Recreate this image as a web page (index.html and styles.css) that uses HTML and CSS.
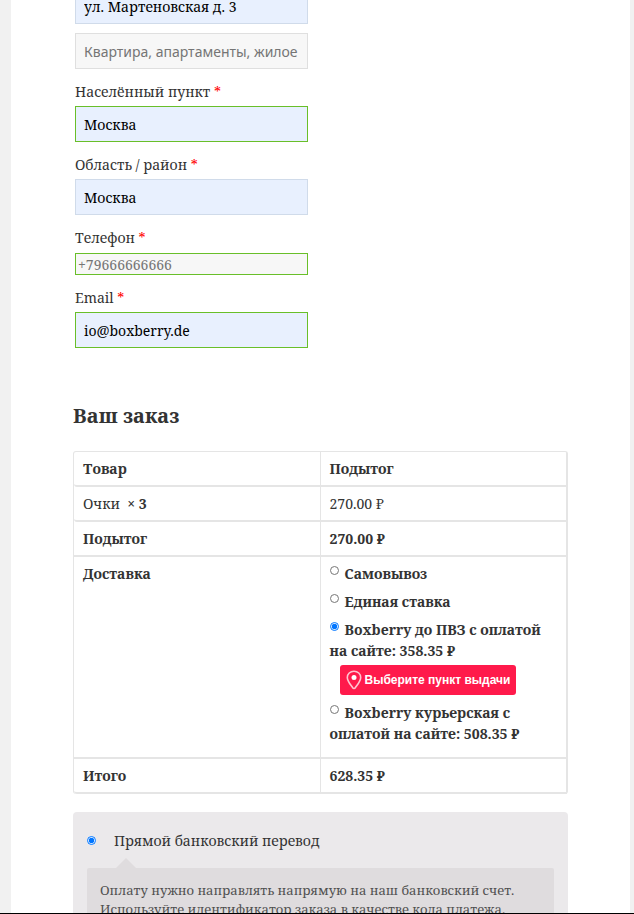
FILE: index.html
```
<!doctype html>
<html lang="ru">
<head>
    <meta charset="UTF-8">
    <meta name="viewport" content="width=device-width, initial-scale=1.0">
    <title>Оформление заказа</title>
    <link rel="stylesheet" href="styles.css">
</head>
<body>
    <div class="site">
        <form class="checkout">
            <div class="billing">
                <input type="text" class="filled" aria-label="Адрес" value="ул. Мартеновская д. 3">
                <input type="text" class="second" aria-label="Квартира" placeholder="Квартира, апартаменты, жилое помещение и т.д.">
                <label for="city">Населённый пункт <span class="required">*</span></label>
                <input type="text" id="city" class="filled valid" value="Москва">
                <label for="state">Область / район <span class="required">*</span></label>
                <input type="text" id="state" class="filled" value="Москва">
                <label for="phone">Телефон <span class="required">*</span></label>
                <input type="tel" id="phone" class="valid phone" placeholder="+79666666666">
                <label for="email">Email <span class="required">*</span></label>
                <input type="email" id="email" class="filled valid" value="io@boxberry.de">
            </div>

            <h3>Ваш заказ</h3>

            <table class="order">
                <thead>
                    <tr><th>Товар</th><th>Подытог</th></tr>
                </thead>
                <tbody>
                    <tr><td>Очки&nbsp; <strong>× 3</strong></td><td>270.00 ₽</td></tr>
                </tbody>
                <tfoot>
                    <tr><th>Подытог</th><td>270.00 ₽</td></tr>
                    <tr>
                        <th>Доставка</th>
                        <td>
                            <ul class="shipping">
                                <li><input type="radio" name="shipping" id="ship1"><label for="ship1">Самовывоз</label></li>
                                <li><input type="radio" name="shipping" id="ship2"><label for="ship2">Единая ставка</label></li>
                                <li>
                                    <input type="radio" name="shipping" id="ship3" checked><label for="ship3">Boxberry до ПВЗ с оплатой на сайте: 358.35 ₽</label>
                                    <button type="button" class="boxberry">
                                        <svg width="16" height="20" viewBox="0 0 16 20" fill="none">
                                            <path d="M8 1.2C4.2 1.2 1.3 4 1.3 7.5C1.3 11.5 5.2 15.4 6.6 17.6C7.3 18.7 8.7 18.7 9.4 17.6C10.8 15.4 14.7 11.5 14.7 7.5C14.7 4 11.8 1.2 8 1.2Z" stroke="#ffc4d0" stroke-width="1.6"/>
                                            <circle cx="8" cy="7.5" r="2.5" fill="#fff"/>
                                        </svg>
                                        Выберите пункт выдачи
                                    </button>
                                </li>
                                <li><input type="radio" name="shipping" id="ship4"><label for="ship4">Boxberry курьерская с оплатой на сайте: 508.35 ₽</label></li>
                            </ul>
                        </td>
                    </tr>
                    <tr><th>Итого</th><td>628.35 ₽</td></tr>
                </tfoot>
            </table>

            <div class="payment">
                <div class="method">
                    <input type="radio" name="payment" id="bacs" checked>
                    <label for="bacs">Прямой банковский перевод</label>
                </div>
                <div class="payment-box">
                    Оплату нужно направлять напрямую на наш банковский счет. Используйте идентификатор заказа в качестве кода платежа. Заказ будет отправлен после поступления средств на наш счет.
                </div>
            </div>
        </form>
    </div>
</body>
</html>
```
FILE: styles.css
```
* {
    box-sizing: border-box;
}
body {
    margin: 0;
    height: 100vh;
    overflow: hidden;
    background: #f1f1f1;
    border-bottom: 1px solid #000;
    color: #333;
    font-family: "Noto Serif", "DejaVu Serif Condensed", "DejaVu Serif", serif;
    font-size: 14px;
    line-height: 21px;
}
.site {
    margin: 0 4px 0 11px;
    padding: 0 62px;
    background: #fff;
}
.checkout {
    margin-top: -12px;
}
.billing {
    width: 47%;
    margin-left: 2px;
}
.billing label {
    display: block;
    margin-top: 12px;
    margin-bottom: 4px;
}
.required {
    color: #f00;
    font-weight: normal;
}
.billing input {
    display: block;
    width: 100%;
    height: 36px;
    padding: 0 8px;
    border: 1px solid #dfdfdf;
    border-radius: 0;
    background: #f7f7f7;
    color: #000;
    font: inherit;
}
.billing input::placeholder {
    color: #757575;
}
.billing .filled {
    border-color: #d0dbea;
    background: #e8f0fe;
}
.billing .valid {
    border-color: #69bf29;
}
.billing .second {
    margin-top: 9px;
    font-family: "Noto Sans", sans-serif;
}
.billing .phone {
    height: 22px;
    margin-top: 5px;
    padding: 0 2px;
}
h3 {
    margin: 55px 0 22px;
    font-size: 20px;
    line-height: 26px;
}
.order {
    width: 100%;
    border: 1px solid #e5e5e5;
    border-width: 1px 1px 0 1px;
    border-radius: 3px;
    border-spacing: 0;
    table-layout: fixed;
}
.order th,
.order td {
    padding: 6px 9px;
    border-bottom: 2px solid #e5e5e5;
    border-right: 1px solid #e5e5e5;
    text-align: left;
    vertical-align: top;
}
.order tfoot td {
    font-weight: bold;
}
.order tr:last-child > :first-child {
    border-bottom-left-radius: 3px;
}
input[type="radio"] {
    width: 9px;
    height: 9px;
    margin: 0;
}
.shipping {
    margin: 0 0 7px;
    padding: 0;
    list-style: none;
}
.shipping li {
    margin-bottom: 7px;
}
.shipping input {
    margin: 3px 6px 0 0;
    vertical-align: top;
}
.boxberry {
    display: flex;
    align-items: center;
    gap: 3px;
    height: 30px;
    margin: 4px 0 0 10px;
    padding: 0 6px;
    border: 0;
    border-radius: 3px;
    background: #ff1a4b;
    color: #fff;
    font: bold 12px "Liberation Sans", Arial, sans-serif;
    white-space: nowrap;
}
.payment {
    margin-top: 18px;
    padding: 14px;
    border-radius: 4px;
    background: #ebe9eb;
}
.method {
    display: flex;
    align-items: center;
    gap: 18px;
    height: 28px;
}
.payment-box {
    position: relative;
    margin-top: 14px;
    padding: 13px;
    border-radius: 2px;
    background: #dfdcde;
    color: #515151;
    font-size: 13px;
    line-height: 19px;
}
.payment-box::before {
    content: "";
    position: absolute;
    top: -10px;
    left: 29px;
    border: 10px solid transparent;
    border-top: 0;
    border-bottom-color: #dfdcde;
}
```
